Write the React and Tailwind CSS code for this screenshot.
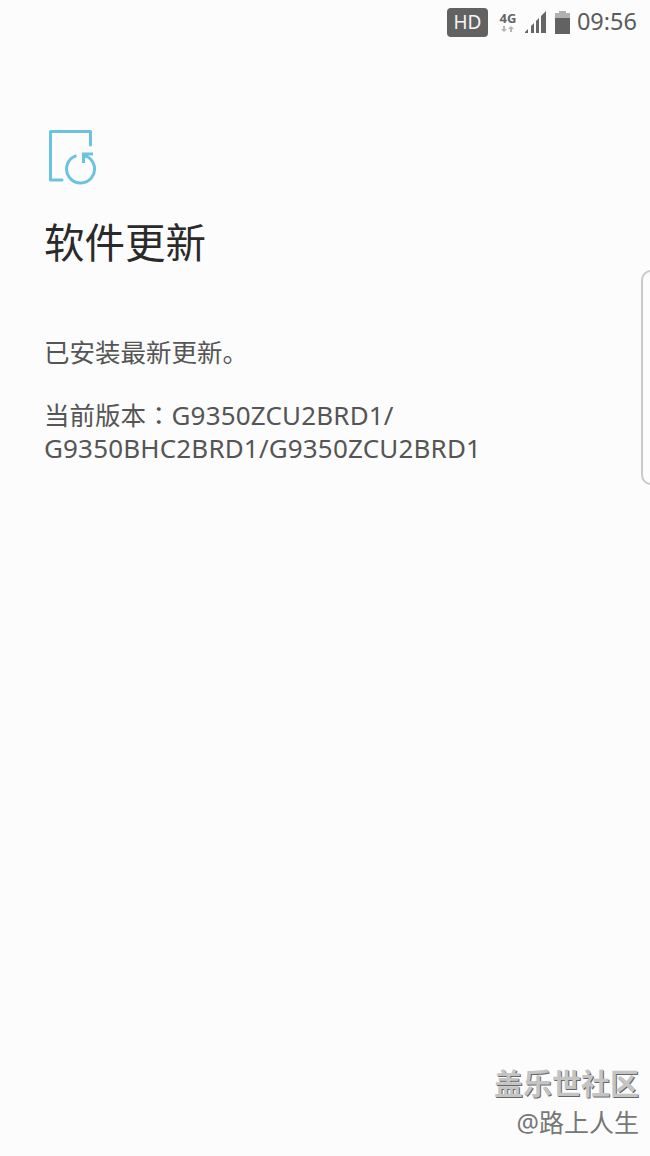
const latin = { fontFamily: '"Noto Sans", "Noto Sans CJK SC", sans-serif' };
const colon = { fontFamily: '"Noto Sans CJK TC", sans-serif' };

const UpdateIcon = () => (
  <svg width="48" height="56" viewBox="0 0 48 56" fill="none" stroke="#6cc3df" strokeWidth="3">
    <path d="M13 50H1.5V1.5H41.5V15" strokeLinejoin="round" strokeLinecap="round" />
    <path d="M27.5 25.6A14 14 0 1 0 36.5 25.9" />
    <path d="M34.5 33V24H44" strokeWidth="3" />
    <path d="M35 24.5H40L35 29.5z" fill="#6cc3df" stroke="none" />
  </svg>
);

const StatusBar = () => (
  <div className="flex items-center justify-end h-[46px] pr-[13px] pb-[2px] text-[#5f5f5f]">
    <span className="flex items-center justify-center w-[41px] h-[29px] rounded-[4px] bg-[#626262] text-[#f5f5f5] text-[19px] mr-[11px]" style={latin}>HD</span>
    <div className="flex flex-col items-center w-[18px] mr-[8px] leading-none">
      <span className="text-[13px] leading-[12px] font-bold text-[#666666]" style={latin}>4G</span>
      <svg width="14" height="6" viewBox="0 0 14 6" fill="#b5b5b5" className="mt-[2px]">
        <path d="M2 0h2v3h2L3 6 0 3h2zM10 0l3 3h-2v3H9V3H7z" />
      </svg>
    </div>
    <svg width="22" height="22" viewBox="0 0 22 22" fill="#666666" className="mr-[8px]">
      <path d="M0 21l3-3v4H0zM6 15l3-3v10H6zM11 10l3-3v15h-3zM16 5l5-5v22h-5z" />
    </svg>
    <svg width="15" height="23" viewBox="0 0 15 23" className="mr-[7px]">
      <rect x="4" y="0" width="7" height="3" fill="#b0b0b0" />
      <rect x="0" y="2" width="15" height="6" fill="#b0b0b0" />
      <rect x="0" y="7" width="15" height="16" fill="#626262" />
    </svg>
    <span className="text-[23.5px] leading-none text-[#5c5c5c]" style={latin}>09:56</span>
  </div>
);

export default function App() {
  return (
    <div className="relative flex flex-col h-[1156px] overflow-hidden bg-[#fcfcfc]" style={latin}>
      <StatusBar />

      <div className="pl-[44px] pt-[84px]">
        <div className="pl-[5px]">
          <UpdateIcon />
        </div>
        <h1 className="mt-[29px] text-[40.5px] leading-[56px] font-normal text-[#2a2a2a]">软件更新</h1>

        <div className="mt-[65px] text-[25.5px] leading-[33px] text-[#555555]">
          <p>已安装最新更新。</p>
          <p className="mt-[28px]">
            当前版本<span style={colon}>：</span><span className="text-[26px] tracking-[0.16px]">G9350ZCU2BRD1/</span>
          </p>
          <p className="text-[26px] tracking-[0.16px]">G9350BHC2BRD1/G9350ZCU2BRD1</p>
        </div>
      </div>

      {/* side handle */}
      <div className="absolute left-[641px] top-[270px] w-[20px] h-[215px] rounded-[10px] border-2 border-[#cacaca]" />

      {/* watermark */}
      <div className="mt-auto pb-[19px] pr-[11px] text-right">
        <p className="text-[29px] leading-[36px] font-bold text-[#c4c4c4] [text-shadow:1px_1px_0_#666666]">盖乐世社区</p>
        <p className="mt-[5px] text-[25px] leading-[30px] text-[#777777]">@路上人生</p>
      </div>
    </div>
  );
}
